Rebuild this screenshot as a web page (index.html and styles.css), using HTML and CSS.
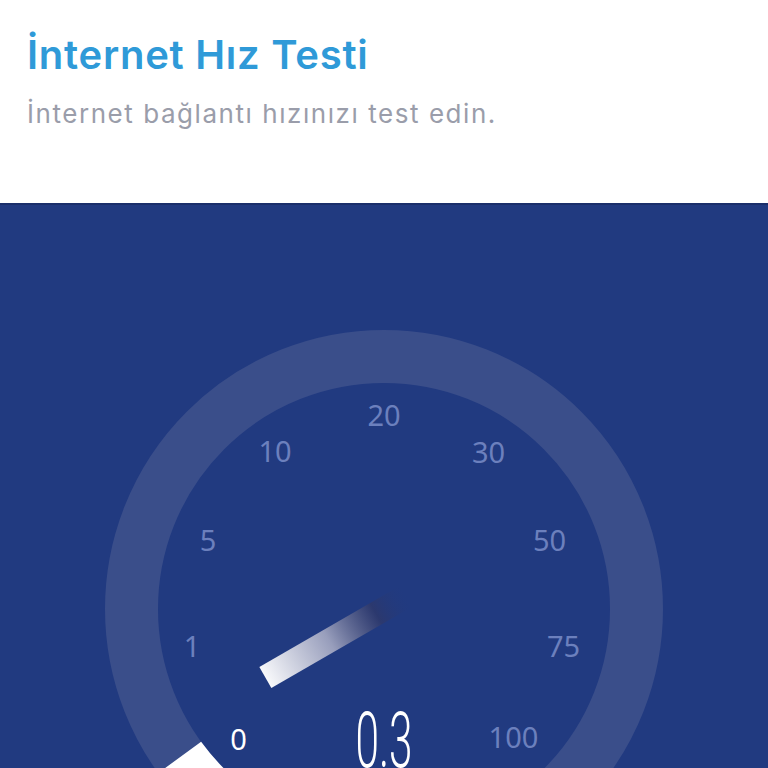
FILE: index.html
```html
<!DOCTYPE html>
<html lang="tr">
<head>
  <meta charset="UTF-8">
  <meta name="viewport" content="width=device-width, initial-scale=1.0">
  <title>İnternet Hız Testi</title>
  <link rel="stylesheet" href="styles.css">
</head>
<body>
  <header class="intro">
    <h1 class="intro-title">İnternet Hız Testi</h1>
    <p class="intro-text">İnternet bağlantı hızınızı test edin.</p>
  </header>

  <section class="speed-panel">
    <svg class="gauge" viewBox="0 0 768 563" width="768" height="563">
      <defs>
        <linearGradient id="needleFade" gradientUnits="userSpaceOnUse" x1="0" y1="-137" x2="0" y2="27">
          <stop offset="0" stop-color="#ffffff" stop-opacity="0.97"/>
          <stop offset="0.45" stop-color="#9ea3bf" stop-opacity="0.95"/>
          <stop offset="0.78" stop-color="#2f3868" stop-opacity="0.75"/>
          <stop offset="1" stop-color="#213a80" stop-opacity="0"/>
        </linearGradient>
      </defs>

      <circle class="gauge-ring" cx="384" cy="404" r="252.5"/>
      <path class="gauge-progress" d="M 205.5 582.5 A 252.5 252.5 0 0 1 179.7 552.4"/>

      <g class="gauge-labels">
        <text x="384" y="221">20</text>
        <text x="275" y="257">10</text>
        <text x="488.5" y="258">30</text>
        <text x="208" y="346">5</text>
        <text x="549.5" y="346">50</text>
        <text x="192" y="452">1</text>
        <text x="563.5" y="452">75</text>
        <text class="is-active" x="238.5" y="545">0</text>
        <text x="513.5" y="543">100</text>
      </g>

      <!-- needle, rotated to the current value -->
      <g transform="translate(384 404) rotate(-120)">
        <rect x="-12" y="-137" width="24" height="164" fill="url(#needleFade)"/>
      </g>

      <text class="gauge-value" x="384" y="562" textLength="57" lengthAdjust="spacingAndGlyphs">0.3</text>
    </svg>
  </section>
</body>
</html>
```

FILE: styles.css
```css
body {
  margin: 0;
  padding: 0;
  width: 768px;
  height: 768px;
  overflow: hidden;
  display: flex;
  flex-direction: column;
  background-color: #ffffff;
  font-family: Inter, "Open Sans", sans-serif;
}
.intro {
  height: 203px;
  box-sizing: border-box;
  padding: 35px 27px 0;
}
.intro-title {
  margin: 0;
  font-size: 40px;
  line-height: 1;
  font-weight: 600;
  letter-spacing: 0.75px;
  color: #2f9ad8;
}
.intro-text {
  margin: 26px 0 0;
  font-size: 26px;
  line-height: 1;
  font-weight: 400;
  letter-spacing: 1.55px;
  color: #9a9daa;
}
.speed-panel {
  flex: 1;
  background-color: #213a80;
  border-top: 2px solid #1b2f6b;
  overflow: hidden;
}
.gauge {
  display: block;
}
.gauge-ring {
  fill: none;
  stroke: #3a4e8a;
  stroke-width: 53;
}
.gauge-progress {
  fill: none;
  stroke: #ffffff;
  stroke-width: 53;
}
.gauge-labels text {
  font-family: "Noto Sans", "Open Sans", sans-serif;
  font-size: 29px;
  fill: #6c80bd;
  text-anchor: middle;
}
.gauge-labels .is-active {
  fill: #ffffff;
}
.gauge-value {
  font-family: Roboto, "DejaVu Sans", sans-serif;
  font-weight: 300;
  font-size: 78px;
  fill: #ffffff;
  text-anchor: middle;
}
```
